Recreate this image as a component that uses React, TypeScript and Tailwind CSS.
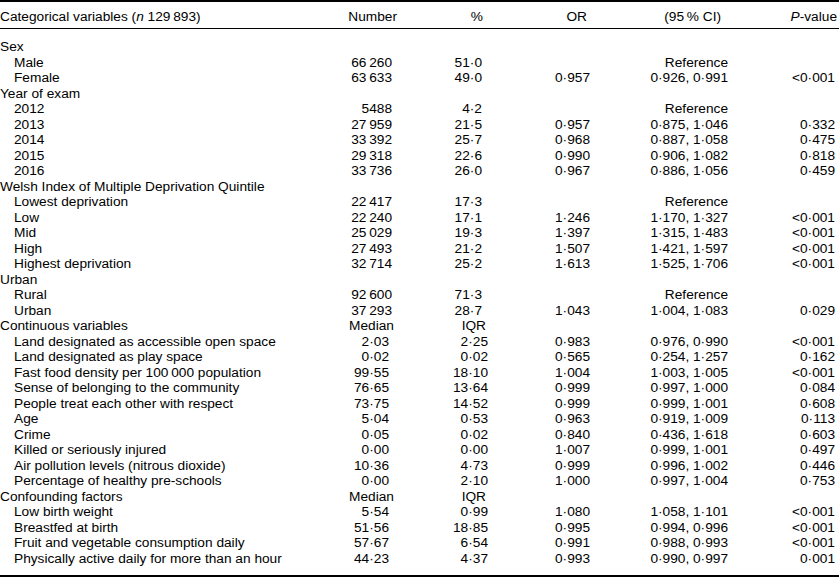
import React from "react";

type Row =
  | { kind: "group"; label: string; n?: string; p?: string }
  | { kind: "item"; label: string; n: string; p: string; or?: string; ci: string; pv?: string; cont?: boolean };

const T = "\u2009";

const rows: Row[] = [
  { kind: "group", label: "Sex" },
  { kind: "item", label: "Male", n: `66${T}260`, p: "51·0", ci: "Reference" },
  { kind: "item", label: "Female", n: `63${T}633`, p: "49·0", or: "0·957", ci: "0·926, 0·991", pv: "<0·001" },
  { kind: "group", label: "Year of exam" },
  { kind: "item", label: "2012", n: "5488", p: "4·2", ci: "Reference" },
  { kind: "item", label: "2013", n: `27${T}959`, p: "21·5", or: "0·957", ci: "0·875, 1·046", pv: "0·332" },
  { kind: "item", label: "2014", n: `33${T}392`, p: "25·7", or: "0·968", ci: "0·887, 1·058", pv: "0·475" },
  { kind: "item", label: "2015", n: `29${T}318`, p: "22·6", or: "0·990", ci: "0·906, 1·082", pv: "0·818" },
  { kind: "item", label: "2016", n: `33${T}736`, p: "26·0", or: "0·967", ci: "0·886, 1·056", pv: "0·459" },
  { kind: "group", label: "Welsh Index of Multiple Deprivation Quintile" },
  { kind: "item", label: "Lowest deprivation", n: `22${T}417`, p: "17·3", ci: "Reference" },
  { kind: "item", label: "Low", n: `22${T}240`, p: "17·1", or: "1·246", ci: "1·170, 1·327", pv: "<0·001" },
  { kind: "item", label: "Mid", n: `25${T}029`, p: "19·3", or: "1·397", ci: "1·315, 1·483", pv: "<0·001" },
  { kind: "item", label: "High", n: `27${T}493`, p: "21·2", or: "1·507", ci: "1·421, 1·597", pv: "<0·001" },
  { kind: "item", label: "Highest deprivation", n: `32${T}714`, p: "25·2", or: "1·613", ci: "1·525, 1·706", pv: "<0·001" },
  { kind: "group", label: "Urban" },
  { kind: "item", label: "Rural", n: `92${T}600`, p: "71·3", ci: "Reference" },
  { kind: "item", label: "Urban", n: `37${T}293`, p: "28·7", or: "1·043", ci: "1·004, 1·083", pv: "0·029" },
  { kind: "group", label: "Continuous variables", n: "Median", p: "IQR" },
  { kind: "item", cont: true, label: "Land designated as accessible open space", n: "2·03", p: "2·25", or: "0·983", ci: "0·976, 0·990", pv: "<0·001" },
  { kind: "item", cont: true, label: "Land designated as play space", n: "0·02", p: "0·02", or: "0·565", ci: "0·254, 1·257", pv: "0·162" },
  { kind: "item", cont: true, label: `Fast food density per 100${T}000 population`, n: "99·55", p: "18·10", or: "1·004", ci: "1·003, 1·005", pv: "<0·001" },
  { kind: "item", cont: true, label: "Sense of belonging to the community", n: "76·65", p: "13·64", or: "0·999", ci: "0·997, 1·000", pv: "0·084" },
  { kind: "item", cont: true, label: "People treat each other with respect", n: "73·75", p: "14·52", or: "0·999", ci: "0·999, 1·001", pv: "0·608" },
  { kind: "item", cont: true, label: "Age", n: "5·04", p: "0·53", or: "0·963", ci: "0·919, 1·009", pv: "0·113" },
  { kind: "item", cont: true, label: "Crime", n: "0·05", p: "0·02", or: "0·840", ci: "0·436, 1·618", pv: "0·603" },
  { kind: "item", cont: true, label: "Killed or seriously injured", n: "0·00", p: "0·00", or: "1·007", ci: "0·999, 1·001", pv: "0·497" },
  { kind: "item", cont: true, label: "Air pollution levels (nitrous dioxide)", n: "10·36", p: "4·73", or: "0·999", ci: "0·996, 1·002", pv: "0·446" },
  { kind: "item", cont: true, label: "Percentage of healthy pre-schools", n: "0·00", p: "2·10", or: "1·000", ci: "0·997, 1·004", pv: "0·753" },
  { kind: "group", label: "Confounding factors", n: "Median", p: "IQR" },
  { kind: "item", cont: true, label: "Low birth weight", n: "5·54", p: "0·99", or: "1·080", ci: "1·058, 1·101", pv: "<0·001" },
  { kind: "item", cont: true, label: "Breastfed at birth", n: "51·56", p: "18·85", or: "0·995", ci: "0·994, 0·996", pv: "<0·001" },
  { kind: "item", cont: true, label: "Fruit and vegetable consumption daily", n: "57·67", p: "6·54", or: "0·991", ci: "0·988, 0·993", pv: "<0·001" },
  { kind: "item", cont: true, label: "Physically active daily for more than an hour", n: "44·23", p: "4·37", or: "0·993", ci: "0·990, 0·997", pv: "0·001" },
];

function BodyRow({ r }: { r: Row }) {
  if (r.kind === "group") {
    return (
      <div className="flex h-[15.5px] leading-[15.5px] whitespace-nowrap">
        <div className="w-[300px] pl-0">{r.label}</div>
        <div className="w-[100px] text-right pr-[6px]">{r.n ?? ""}</div>
        <div className="w-[100px] text-right pr-[14px]">{r.p ?? ""}</div>
        <div className="w-[100px]" />
        <div className="w-[140px]" />
        <div className="w-[99px]" />
      </div>
    );
  }
  return (
    <div className="flex h-[15.5px] leading-[15.5px] whitespace-nowrap">
      <div className="w-[300px] pl-[14px]">{r.label}</div>
      <div className={r.cont ? "w-[100px] text-right pr-[11px]" : "w-[100px] text-right pr-[8px]"}>{r.n}</div>
      <div className={r.cont ? "w-[100px] text-right pr-[12px]" : "w-[100px] text-right pr-[18px]"}>{r.p}</div>
      <div className="w-[100px] text-right pr-[10px]">{r.or ?? ""}</div>
      <div className="w-[140px] text-right pr-[12px]">{r.ci}</div>
      <div className="w-[99px] text-right pr-[4px]">{r.pv ?? ""}</div>
    </div>
  );
}

export default function App() {
  return (
    <div
      className="w-[839px] h-[577px] bg-white text-black text-[13.7px] overflow-hidden"
      style={{ fontFamily: '"Liberation Sans", Arial, Helvetica, sans-serif' }}
    >
      <div className="border-t-2 border-b border-black">
        <div className="flex h-[26px] pt-[7px] leading-[16px] whitespace-nowrap">
          <div className="w-[300px]">
            Categorical variables (<span className="italic">n</span> 129{T}893)
          </div>
          <div className="w-[100px] text-right pr-[3px]">Number</div>
          <div className="w-[100px] text-right pr-[17px]">%</div>
          <div className="w-[100px] text-right pr-[13px]">OR</div>
          <div className="w-[140px] text-right pr-[19px]">(95{T}% CI)</div>
          <div className="w-[99px] text-right pr-[2px]">
            <span className="italic">P</span>-value
          </div>
        </div>
      </div>
      <div className="pt-[10px] pb-[9px] border-b-2 border-black">
        {rows.map((r, i) => (
          <BodyRow key={i} r={r} />
        ))}
      </div>
    </div>
  );
}
